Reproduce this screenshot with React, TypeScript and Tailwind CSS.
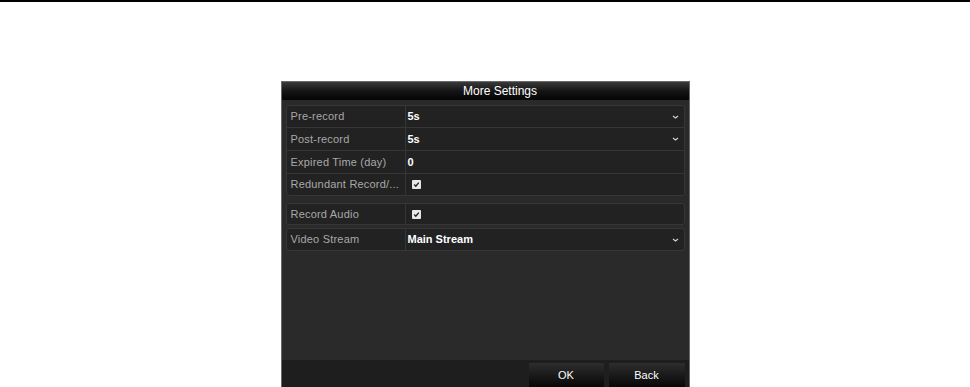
import React from "react";

const Caret = () => (
  <svg width="7" height="5" viewBox="0 0 7 5" className="absolute right-[5px] top-1/2 -translate-y-1/2">
    <path d="M1 1.5 L3.5 3.5 L6 1.5" stroke="#d0d0d0" strokeWidth="1.2" fill="none" />
  </svg>
);

const Check = () => (
  <span className="inline-flex ml-[4px] w-[9px] h-[9px] bg-[#e8e8e8] rounded-[1px] items-center justify-center">
    <svg width="7" height="7" viewBox="0 0 7 7">
      <path d="M1.2 3.6 L2.8 5.2 L5.8 1.6" stroke="#222" strokeWidth="1.4" fill="none" />
    </svg>
  </span>
);

type RowProps = { label: string; value?: string; check?: boolean; caret?: boolean; last?: boolean; h: string };

const Row = ({ label, value, check, caret, last, h }: RowProps) => (
  <div className={`flex ${h} ${last ? "" : "border-b border-[#363636]"}`}>
    <div className="w-[119px] shrink-0 border-r border-[#363636] flex items-center pl-[4px] text-[#a8a8a8] text-[11px] tracking-[0.2px] whitespace-nowrap overflow-hidden">
      {label}
    </div>
    <div className="relative flex-1 flex items-center pl-[2px] text-white text-[11px] font-bold">
      {check ? <Check /> : value}
      {caret && <Caret />}
    </div>
  </div>
);

export default function App() {
  return (
    <div className="w-[970px] h-[387px] bg-white overflow-hidden" style={{ fontFamily: '"Liberation Sans", Arial, sans-serif' }}>
      <div className="h-[2px] bg-black" />
      <div className="flex justify-center pt-[79px]">
        <div className="w-[409px] h-[306px] bg-[#2a2a2b] border-l border-t border-r border-[#6a6a6a] flex flex-col">
          <div className="h-[18px] bg-gradient-to-b from-[#3a3a3a] via-[#151515] to-[#050505] flex items-center justify-center pl-[30px] text-white text-[12px]">
            More Settings
          </div>
          <div className="flex-1 px-[4px] pt-[5px] flex flex-col">
            <div className="rounded-[3px] border border-[#363636] bg-[#222223]">
              <Row label="Pre-record" value="5s" caret h="h-[22px]" />
              <Row label="Post-record" value="5s" caret h="h-[23px]" />
              <Row label="Expired Time (day)" value="0" h="h-[23px]" />
              <Row label="Redundant Record/..." check last h="h-[21px]" />
            </div>
            <div className="mt-[7px] rounded-[3px] border border-[#363636] bg-[#222223]">
              <Row label="Record Audio" check last h="h-[20px]" />
            </div>
            <div className="mt-[3px] rounded-[3px] border border-[#363636] bg-[#222223]">
              <Row label="Video Stream" value="Main Stream" caret last h="h-[21px]" />
            </div>
          </div>
          <div className="h-[27px] bg-[#1e1e1e] flex justify-end items-start pt-[3px] pr-[4px] gap-[5px]">
            <div className="w-[75px] h-[24px] bg-gradient-to-b from-[#2e2e2e] to-[#080808] flex items-center justify-center text-white text-[11px]">OK</div>
            <div className="w-[76px] h-[24px] bg-gradient-to-b from-[#2e2e2e] to-[#080808] flex items-center justify-center text-white text-[11px]">Back</div>
          </div>
        </div>
      </div>
    </div>
  );
}
